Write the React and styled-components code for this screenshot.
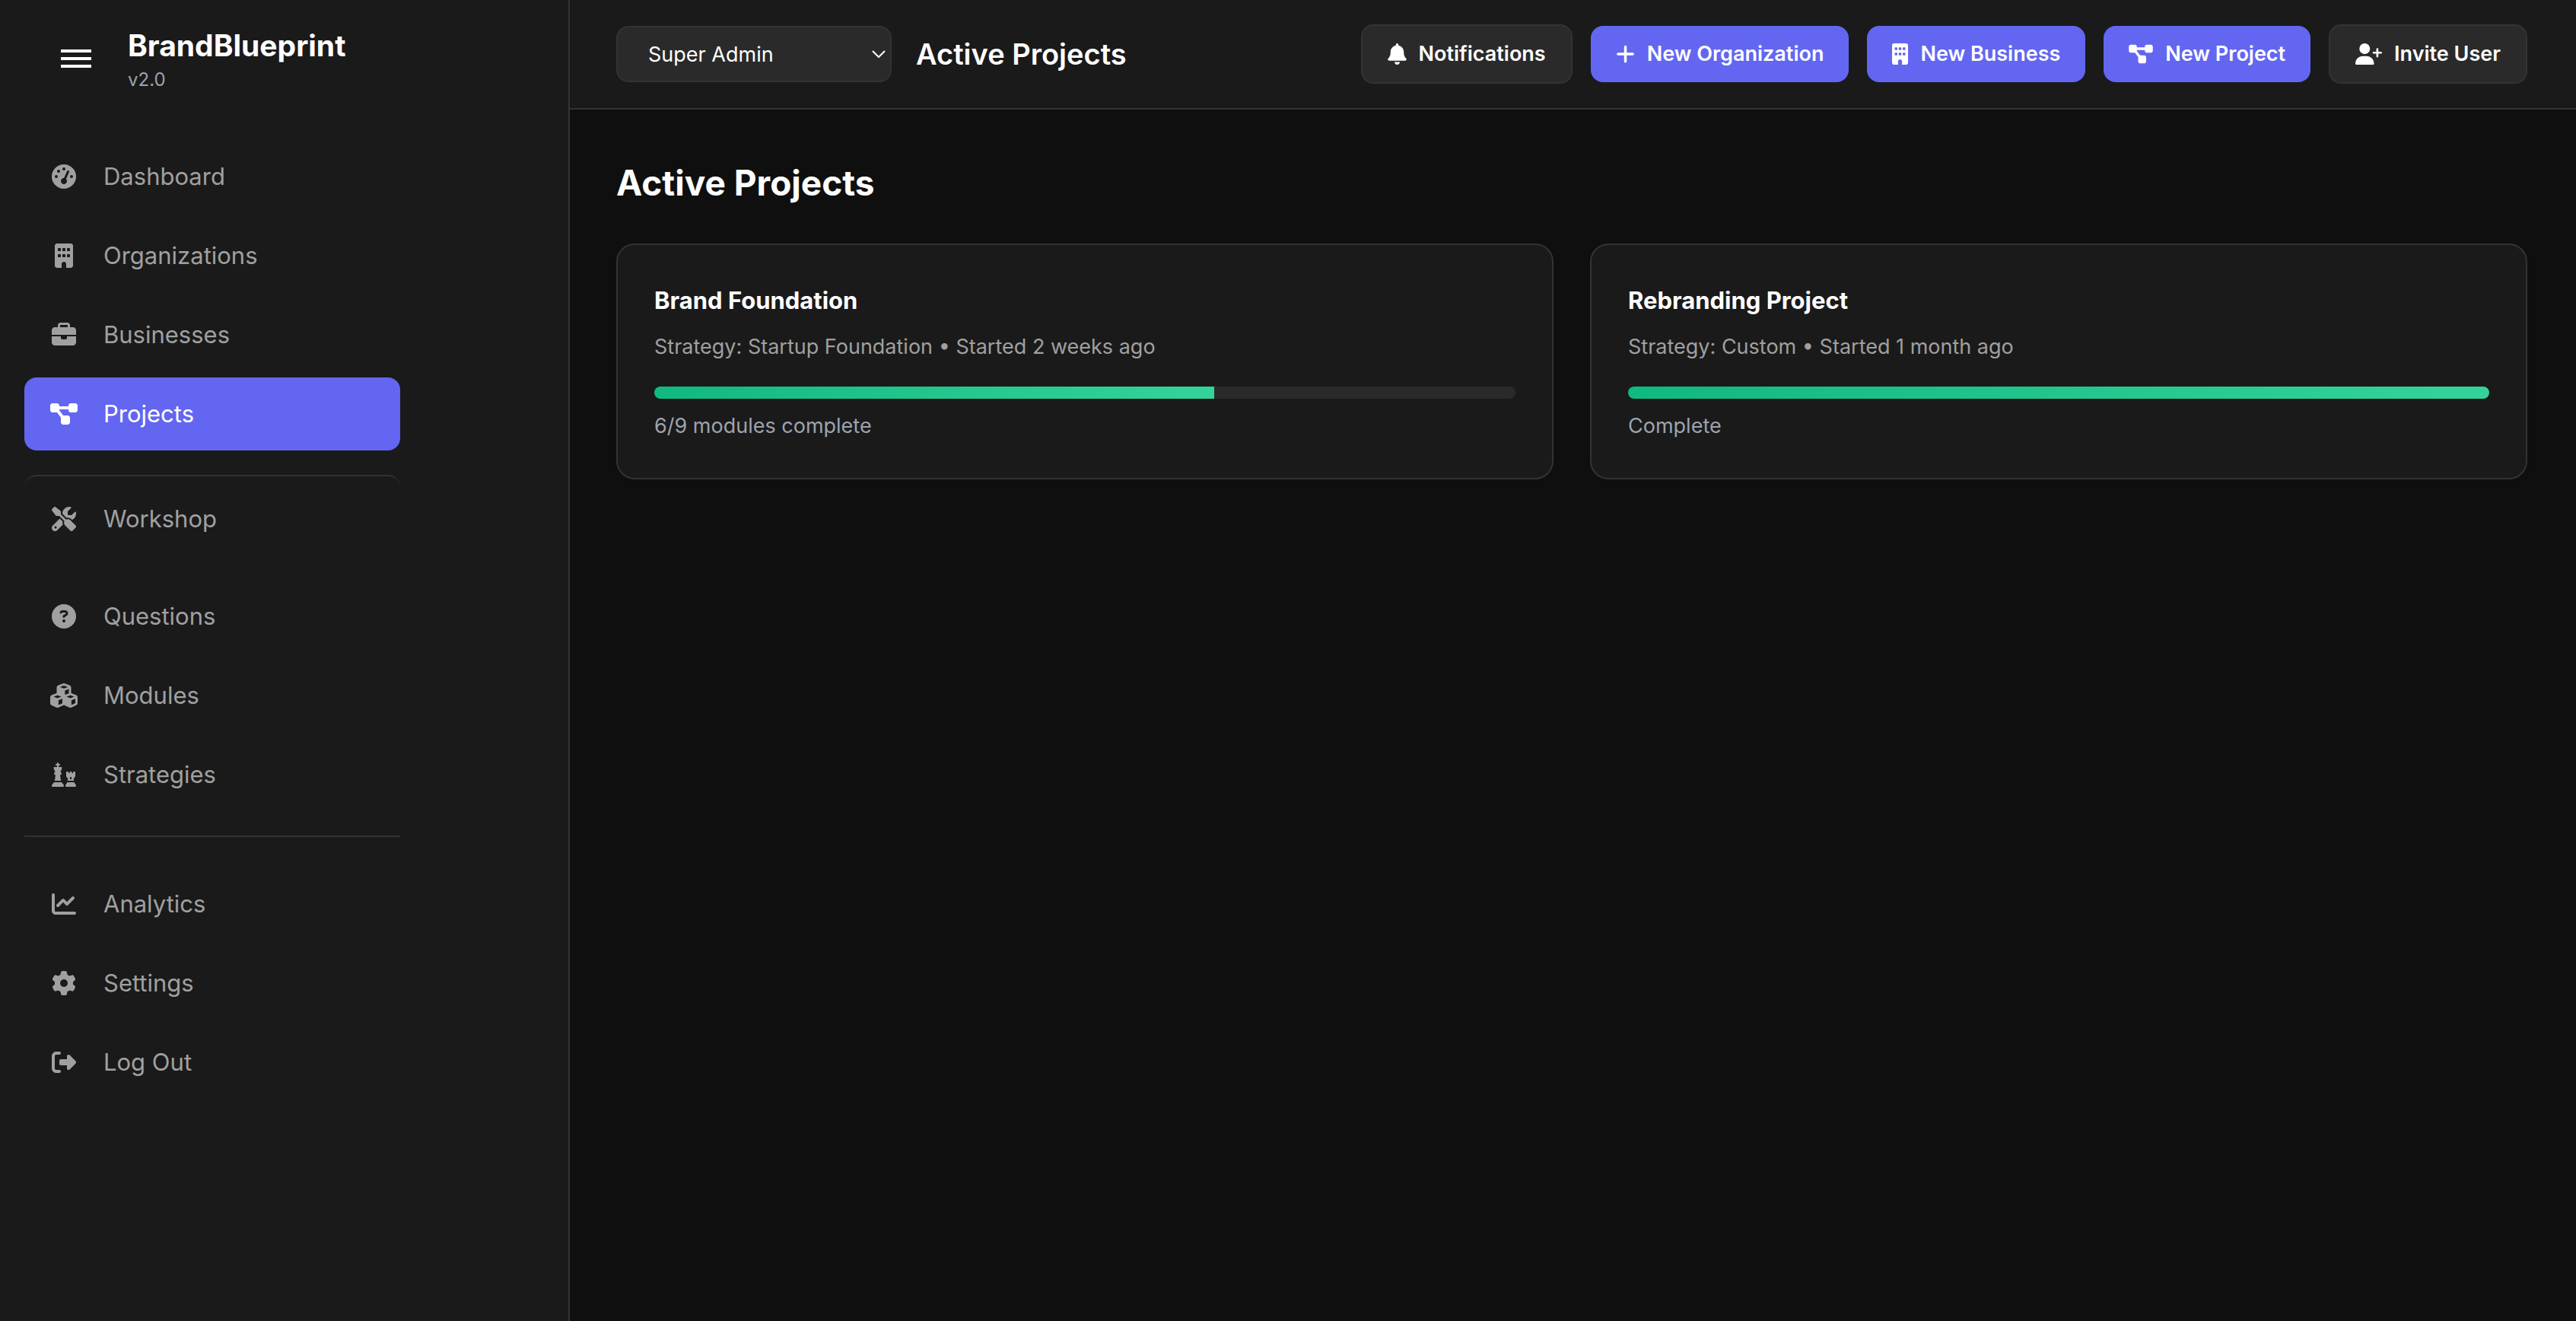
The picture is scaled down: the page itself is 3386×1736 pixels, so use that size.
import React from 'react';
import styled, { createGlobalStyle, css } from 'styled-components';
import {
  FaBell,
  FaBriefcase,
  FaBuilding,
  FaChartLine,
  FaCircleQuestion,
  FaCubes,
  FaDiagramProject,
  FaGaugeHigh,
  FaGear,
  FaPlus,
  FaRightFromBracket,
  FaScrewdriverWrench,
  FaUserPlus,
} from 'react-icons/fa6';

const color = {
  page: '#0f0f0f',
  panel: '#1a1a1a',
  control: '#2a2a2a',
  line: '#333333',
  primary: '#6366f1',
  text: '#ffffff',
  muted: '#a0a0a0',
  faint: '#9ca3af',
};

const GlobalStyle = createGlobalStyle`
  *, *::before, *::after {
    box-sizing: border-box;
  }

  body {
    margin: 0;
    background: ${color.page};
    color: ${color.text};
    font-family: Inter, 'Liberation Sans', sans-serif;
  }

  button, select {
    font-family: inherit;
  }

  h1, h2, h3, p {
    margin: 0;
  }
`;

const Shell = styled.div`
  display: flex;
  min-height: 100vh;
`;

const Sidebar = styled.aside`
  flex: none;
  width: 749px;
  background: ${color.panel};
  border-right: 2px solid ${color.line};
`;

const SidebarHeader = styled.div`
  display: flex;
  align-items: center;
  gap: 32px;
  padding: 32px 64px 0;
`;

const MenuButton = styled.button`
  display: flex;
  flex-direction: column;
  gap: 6px;
  width: 72px;
  padding: 16px;
  border: 0;
  background: transparent;
  cursor: pointer;
`;

const MenuBar = styled.span`
  height: 4px;
  background: ${color.text};
`;

const BrandName = styled.div`
  font-size: 39px;
  font-weight: 700;
  line-height: 56px;
`;

const Version = styled.div`
  color: ${color.faint};
  font-size: 24px;
  line-height: 34px;
`;

const Nav = styled.nav`
  display: flex;
  flex-direction: column;
  gap: 32px;
  width: 558px;
  padding: 62px 32px 32px;
`;

const NavGroup = styled.div`
  display: flex;
  flex-direction: column;
  gap: 8px;
`;

const NavDivider = styled.hr`
  width: 100%;
  height: 2px;
  margin: 0 0 8px;
  border: 0;
  background: ${color.line};
`;

const NavLink = styled.a`
  display: flex;
  align-items: center;
  gap: 32px;
  padding: 24px 32px;
  border-radius: 16px;
  background: ${(p) => (p.$active ? color.primary : 'transparent')};
  color: ${(p) => (p.$active ? color.text : color.muted)};
  font-size: 31px;
  line-height: 48px;
  text-decoration: none;
  ${(p) =>
    p.$ruled &&
    css`
      padding-top: 32px;
      border-top: 2px solid ${color.line};
    `}
`;

const NavIcon = styled.span`
  display: flex;
  width: 40px;

  svg {
    width: 100%;
    height: 32px;
  }
`;

const Main = styled.main`
  flex: 1;
  min-width: 0;
`;

const TopBar = styled.header`
  display: flex;
  align-items: center;
  justify-content: space-between;
  gap: 32px;
  padding: 32px 64px 32px 61px;
  background: ${color.panel};
  border-bottom: 2px solid ${color.line};
`;

const TopGroup = styled.div`
  display: flex;
  align-items: center;
  gap: ${(p) => p.$gap}px;
`;

const SelectBox = styled.label`
  position: relative;
  display: block;
  width: 362px;
`;

const RoleSelect = styled.select`
  appearance: none;
  width: 100%;
  height: 74px;
  padding: 0 40px;
  border: 2px solid ${color.line};
  border-radius: 16px;
  background: ${color.control};
  color: ${color.text};
  font-size: 27px;
`;

const SelectArrow = styled.svg`
  position: absolute;
  top: 32px;
  right: 8px;
  width: 18px;
  height: 10px;
  pointer-events: none;
`;

const TopTitle = styled.h1`
  font-size: 38px;
  font-weight: 600;
  line-height: 56px;
`;

const Button = styled.button`
  display: flex;
  align-items: center;
  gap: 16px;
  padding: 20px 33px;
  border: ${(p) => (p.$primary ? '0' : `2px solid ${color.line}`)};
  border-radius: 16px;
  background: ${(p) => (p.$primary ? color.primary : color.control)};
  color: ${color.text};
  font-size: 27px;
  font-weight: 600;
  line-height: 34px;
  white-space: nowrap;
  cursor: pointer;

  svg {
    width: ${(p) => p.$iconWidth}px;
    height: 28px;
  }
`;

const Content = styled.section`
  padding: 64px 64px 64px 61px;
`;

const SectionTitle = styled.h2`
  margin-bottom: 48px;
  font-size: 46px;
  font-weight: 700;
  line-height: 64px;
`;

const CardGrid = styled.div`
  display: grid;
  grid-template-columns: repeat(2, minmax(0, 1fr));
  gap: 48px;
`;

const Card = styled.article`
  padding: 48px;
  border: 2px solid ${color.line};
  border-radius: 24px;
  background: ${color.panel};
`;

const CardTitle = styled.h3`
  font-size: 31px;
  font-weight: 700;
  line-height: 50px;
`;

const CardMeta = styled.p`
  margin: 16px 0 32px;
  color: ${color.muted};
  font-size: 27px;
  line-height: 40px;
`;

const Track = styled.div`
  height: 16px;
  margin-bottom: 16px;
  overflow: hidden;
  border-radius: 8px;
  background: ${color.control};
`;

const Fill = styled.div`
  height: 100%;
  background: linear-gradient(90deg, #10b981, #34d399);
`;

const CardStatus = styled.p`
  color: ${color.faint};
  font-size: 27px;
  line-height: 40px;
`;

const ChessIcon = () => (
  <svg viewBox="0 0 512 512" fill="currentColor" aria-hidden="true">
    <path d="M144 16c0-8.800-7.200-16-16-16s-16 7.200-16 16v16H96c-8.800 0-16 7.200-16 16s7.200 16 16 16h16v32H60.200C49.100 96 40 105.100 40 116.200c0 2.500.5 4.900 1.300 7.300L73.800 208H72c-13.300 0-24 10.700-24 24s10.700 24 24 24h4c0 45-2.500 88-16 128h136c-13.500-40-16-83-16-128h4c13.300 0 24-10.700 24-24s-10.700-24-24-24h-1.800l32.500-84.500c.9-2.300 1.300-4.800 1.300-7.300 0-11.200-9.100-20.200-20.200-20.200H144V64h16c8.800 0 16-7.200 16-16s-7.200-16-16-16h-16V16zM48 416 4.800 473.600C1.700 477.800 0 482.800 0 488c0 13.300 10.700 24 24 24h208c13.300 0 24-10.700 24-24 0-5.200-1.700-10.200-4.800-14.400L208 416H48z" />
    <path
      fillRule="evenodd"
      d="M304 208v74c0 8.900 3.300 17.400 9.300 24L339 335.600c-.6 17.400-3.500 33.400-7.500 48.400h137c-4-15-6.900-31-7.500-48.400l25.700-29.600c6-6.600 9.300-15.100 9.300-24v-74c0-8.800-7.200-16-16-16h-16c-8.800 0-16 7.200-16 16v16h-24v-16c0-8.800-7.200-16-16-16h-16c-8.800 0-16 7.200-16 16v16h-24v-16c0-8.800-7.200-16-16-16h-16c-8.800 0-16 7.200-16 16zM384 320c0-8.800 7.200-16 16-16s16 7.200 16 16v32h-32v-32z"
    />
    <path d="m328 416-35.200 57.300C289.700 477.500 288 482.700 288 488c0 13.300 10.700 24 24 24h176c13.300 0 24-10.700 24-24 0-5.300-1.700-10.500-4.800-14.700L472 416H328z" />
  </svg>
);

const navGroups = [
  [
    { label: 'Dashboard', Icon: FaGaugeHigh },
    { label: 'Organizations', Icon: FaBuilding },
    { label: 'Businesses', Icon: FaBriefcase },
    { label: 'Projects', Icon: FaDiagramProject, active: true },
  ],
  [{ label: 'Workshop', Icon: FaScrewdriverWrench, ruled: true }],
  [
    { label: 'Questions', Icon: FaCircleQuestion },
    { label: 'Modules', Icon: FaCubes },
    { label: 'Strategies', Icon: ChessIcon },
  ],
];

const accountLinks = [
  { label: 'Analytics', Icon: FaChartLine },
  { label: 'Settings', Icon: FaGear },
  { label: 'Log Out', Icon: FaRightFromBracket },
];

const actions = [
  { label: 'Notifications', Icon: FaBell, iconWidth: 25 },
  { label: 'New Organization', Icon: FaPlus, iconWidth: 25, primary: true },
  { label: 'New Business', Icon: FaBuilding, iconWidth: 21, primary: true },
  { label: 'New Project', Icon: FaDiagramProject, iconWidth: 32, primary: true },
  { label: 'Invite User', Icon: FaUserPlus, iconWidth: 35 },
];

const projects = [
  {
    name: 'Brand Foundation',
    meta: 'Strategy: Startup Foundation • Started 2 weeks ago',
    percent: 65,
    status: '6/9 modules complete',
  },
  {
    name: 'Rebranding Project',
    meta: 'Strategy: Custom • Started 1 month ago',
    percent: 100,
    status: 'Complete',
  },
];

const NavItem = ({ label, Icon, active, ruled }) => (
  <NavLink href="#" $active={active} $ruled={ruled} aria-current={active ? 'page' : undefined}>
    <NavIcon>
      <Icon />
    </NavIcon>
    <span>{label}</span>
  </NavLink>
);

const ProjectCard = ({ name, meta, percent, status }) => (
  <Card>
    <CardTitle>{name}</CardTitle>
    <CardMeta>{meta}</CardMeta>
    <Track role="progressbar" aria-label={name} aria-valuenow={percent} aria-valuemin={0} aria-valuemax={100}>
      <Fill style={{ width: `${percent}%` }} />
    </Track>
    <CardStatus>{status}</CardStatus>
  </Card>
);

export default function App() {
  return (
    <>
      <GlobalStyle />
      <Shell>
        <Sidebar>
          <SidebarHeader>
            <MenuButton type="button" aria-label="Toggle menu">
              <MenuBar />
              <MenuBar />
              <MenuBar />
            </MenuButton>
            <div>
              <BrandName>BrandBlueprint</BrandName>
              <Version>v2.0</Version>
            </div>
          </SidebarHeader>
          <Nav>
            {navGroups.map((group) => (
              <NavGroup key={group[0].label}>
                {group.map((item) => (
                  <NavItem key={item.label} {...item} />
                ))}
              </NavGroup>
            ))}
            <NavDivider />
            <NavGroup>
              {accountLinks.map((item) => (
                <NavItem key={item.label} {...item} />
              ))}
            </NavGroup>
          </Nav>
        </Sidebar>
        <Main>
          <TopBar>
            <TopGroup $gap={32}>
              <SelectBox>
                <RoleSelect aria-label="Role" defaultValue="super">
                  <option value="super">Super Admin</option>
                </RoleSelect>
                <SelectArrow viewBox="0 0 18 10" fill="none" stroke="#ffffff" strokeWidth="2" aria-hidden="true">
                  <path d="M1 1l8 8 8-8" />
                </SelectArrow>
              </SelectBox>
              <TopTitle>Active Projects</TopTitle>
            </TopGroup>
            <TopGroup $gap={24}>
              {actions.map(({ label, Icon, iconWidth, primary }) => (
                <Button key={label} type="button" $primary={primary} $iconWidth={iconWidth}>
                  <Icon />
                  {label}
                </Button>
              ))}
            </TopGroup>
          </TopBar>
          <Content>
            <SectionTitle>Active Projects</SectionTitle>
            <CardGrid>
              {projects.map((project) => (
                <ProjectCard key={project.name} {...project} />
              ))}
            </CardGrid>
          </Content>
        </Main>
      </Shell>
    </>
  );
}
